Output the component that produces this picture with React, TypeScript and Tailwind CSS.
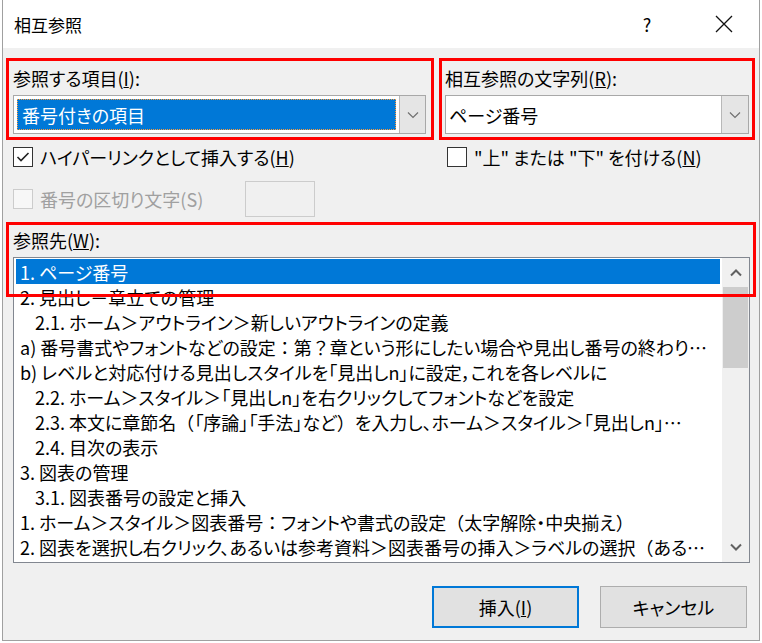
import React from "react";

const rows: { text: string; indent?: boolean; selected?: boolean }[] = [
  { text: "1. ページ番号", selected: true },
  { text: "2. 見出し－章立ての管理" },
  { text: "2.1. ホーム＞アウトライン＞新しいアウトラインの定義", indent: true },
  { text: "a) 番号書式やフォントなどの設定：第？章という形にしたい場合や見出し番号の終わり…" },
  { text: "b) レベルと対応付ける見出しスタイルを「見出しn」に設定，これを各レベルに" },
  { text: "2.2. ホーム＞スタイル＞「見出しn」を右クリックしてフォントなどを設定", indent: true },
  { text: "2.3. 本文に章節名（「序論」「手法」など）を入力し、ホーム＞スタイル＞「見出しn」…", indent: true },
  { text: "2.4. 目次の表示", indent: true },
  { text: "3. 図表の管理" },
  { text: "3.1. 図表番号の設定と挿入", indent: true },
  { text: "1. ホーム＞スタイル＞図表番号：フォントや書式の設定（太字解除・中央揃え）" },
  { text: "2. 図表を選択し右クリック、あるいは参考資料＞図表番号の挿入＞ラベルの選択（ある…" },
];

// full-width punctuation keeps its full em box, like the dialog font does
function RowText({ text }: { text: string }) {
  const parts = text.split(/([（）：？])/);
  return (
    <>
      {parts.map((p, i) =>
        /^[（）：？]$/.test(p) ? (
          <span key={i} className="[font-feature-settings:normal]">
            {p}
          </span>
        ) : (
          <React.Fragment key={i}>{p}</React.Fragment>
        )
      )}
    </>
  );
}

function Chevron({ up = false, bold = false }: { up?: boolean; bold?: boolean }) {
  return (
    <svg width="12" height="8" viewBox="0 0 12 8" className={up ? "rotate-180" : ""}>
      <polyline
        points="1,1.5 6,6.5 11,1.5"
        fill="none"
        stroke={bold ? "#606060" : "#707070"}
        strokeWidth={bold ? 2 : 1.2}
      />
    </svg>
  );
}

function Check({ checked = false, disabled = false }: { checked?: boolean; disabled?: boolean }) {
  return (
    <div
      className={`w-[20px] h-[20px] shrink-0 flex items-center justify-center border ${
        disabled ? "border-[#cccccc] bg-[#f7f7f7]" : "border-[#333333] bg-white"
      }`}
    >
      {checked && (
        <svg width="14" height="12" viewBox="0 0 14 12">
          <polyline points="1.5,6 5,9.5 12.5,2" fill="none" stroke="#222" strokeWidth="1.6" />
        </svg>
      )}
    </div>
  );
}

export default function App() {
  return (
    <div className="w-[762px] h-[643px] bg-white font-['Noto_Sans_CJK_JP',sans-serif] text-black [font-feature-settings:'palt'] overflow-hidden">
      <div className="ml-[2px] w-[758px] h-[641px] border-l border-r border-b border-[#a0a0a0] flex flex-col">
        {/* ---- Title bar ---- */}
        <div className="h-[48px] bg-white flex items-center pl-[11px] shrink-0">
          <span className="text-[17px] leading-none">相互参照</span>
          <span className="ml-auto text-[18px] leading-none w-[20px] text-center mr-[58px]">?</span>
          <svg width="18" height="18" viewBox="0 0 18 18" className="mr-[26px]">
            <path d="M1 1 L17 17 M17 1 L1 17" stroke="#111" strokeWidth="1.3" />
          </svg>
        </div>

        {/* ---- Body ---- */}
        <div className="flex-1 bg-[#f0f0f0] px-[3px] pt-[10px] text-[18px]">
          <div className="flex gap-[5px]">
            <div className="w-[428px] border-[3px] border-[#ff0000] pb-[3px]">
              <div className="h-[34px] flex items-center pl-[4px] leading-none">
                参照する項目(<span className="underline">I</span>):
              </div>
              <div className="ml-[4px] mr-[5px] h-[39px] border border-[#a8a8a8] bg-white flex p-[3px] pr-0">
                <div className="flex-1 bg-[#0078d7] border border-dotted border-[#ff9c3a] flex items-center pl-[4px] text-white leading-none">
                  番号付きの項目
                </div>
                <div className="w-[26px] -my-[3px] ml-[3px] bg-[#e5e5e5] border-l border-[#b8b8b8] flex items-center justify-center">
                  <Chevron />
                </div>
              </div>
            </div>
            <div className="w-[316px] border-[3px] border-[#ff0000] pb-[3px]">
              <div className="h-[34px] flex items-center pl-[3px] leading-none">
                相互参照の文字列(<span className="underline">R</span>):
              </div>
              <div className="ml-[3px] mr-[3px] h-[39px] border border-[#a8a8a8] bg-white flex">
                <div className="flex-1 flex items-center pl-[3px] leading-none">ページ番号</div>
                <div className="w-[27px] bg-[#e5e5e5] border-l border-[#b8b8b8] flex items-center justify-center">
                  <Chevron />
                </div>
              </div>
            </div>
          </div>

          {/* ---- Checkboxes ---- */}
          <div className="flex gap-[5px] mt-[7px] h-[20px]">
            <div className="w-[428px] flex items-center pl-[7px] gap-[7px] leading-none">
              <Check checked />
              <span>
                ハイパーリンクとして挿入する(<span className="underline">H</span>)
              </span>
            </div>
            <div className="w-[316px] flex items-center pl-[8px] gap-[7px] leading-none">
              <Check />
              <span>
                "上" または "下" を付ける(<span className="underline">N</span>)
              </span>
            </div>
          </div>
          <div className="flex items-center mt-[14px] h-[36px] pl-[7px] leading-none">
            <Check disabled />
            <span className="ml-[7px] text-[#a0a0a0]">番号の区切り文字(S)</span>
            <div className="ml-auto mr-[441px] w-[70px] h-[36px] border border-[#cccccc] bg-[#f0f0f0]" />
          </div>

          {/* ---- Reference list ---- */}
          <div className="relative mt-[5px]">
            <div className="h-[35px] flex items-center pl-[7px] leading-none">
              参照先(<span className="underline">W</span>):
            </div>
            <div className="ml-[7px] mr-[6px] h-[306px] border border-[#828790] bg-white flex">
              <div className="flex-1 min-w-0 px-[2px] pt-[1px]">
                {rows.map((r, i) => (
                  <div
                    key={i}
                    className={`h-[25px] flex items-center ${r.indent ? "pl-[19px]" : "pl-[4px]"} ${
                      r.selected ? "bg-[#0078d7] text-white" : ""
                    }`}
                  >
                    <span className="truncate leading-[24px]">
                      <RowText text={r.text} />
                    </span>
                  </div>
                ))}
              </div>
              <div className="w-[27px] bg-[#f0f0f0] flex flex-col">
                <div className="h-[29px] flex items-center justify-center">
                  <Chevron up bold />
                </div>
                <div className="h-[81px] mx-[1px] bg-[#cdcdcd]" />
                <div className="flex-1" />
                <div className="h-[30px] flex items-center justify-center">
                  <Chevron bold />
                </div>
              </div>
            </div>
            <div className="absolute top-0 left-0 right-0 h-[75px] border-[3px] border-[#ff0000] pointer-events-none" />
          </div>

          {/* ---- Buttons ---- */}
          <div className="flex justify-end gap-[21px] mt-[23px] pr-[9px]">
            <button className="w-[147px] h-[42px] border-2 border-[#0078d7] bg-[#e1e1e1] leading-none">
              挿入(<span className="underline">I</span>)
            </button>
            <button className="w-[147px] h-[42px] border border-[#adadad] bg-[#e1e1e1] leading-none">
              キャンセル
            </button>
          </div>
        </div>
      </div>
    </div>
  );
}
